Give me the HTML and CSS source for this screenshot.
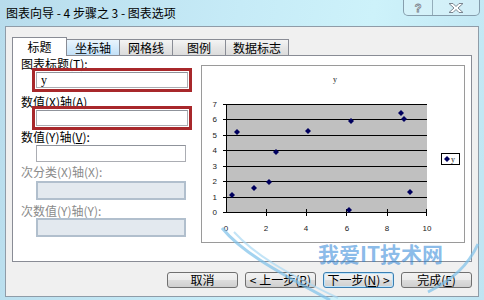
FILE: index.html
```html
<!DOCTYPE html>
<html lang="zh-CN">
<head>
    <meta charset="UTF-8">
    <meta name="viewport" content="width=device-width, initial-scale=1.0">
    <title>图表向导 - 4 步骤之 3 - 图表选项</title>
    <link rel="stylesheet" href="styles.css">
</head>
<body>
<div class="window">
    <div class="titlebar">
        <span class="caption">图表向导 - 4 步骤之 3 - 图表选项</span>
        <div class="caption-buttons">
            <span class="cap-btn help">?</span>
            <span class="cap-btn close">
                <svg width="16" height="10" viewBox="0 0 16 10">
                    <path d="M1 0.5h4l3 3 3-3h4l-5 4.5 5 4.5h-4l-3-3-3 3h-4l5-4.5z" fill="#fff" stroke="#7a8590" stroke-width="1"/>
                </svg>
            </span>
        </div>
    </div>

    <div class="client">
        <div class="tabs">
            <div class="tab selected">标题</div>
            <div class="tab hover">坐标轴</div>
            <div class="tab">网格线</div>
            <div class="tab">图例</div>
            <div class="tab">数据标志</div>
        </div>

        <div class="panel">
            <div class="fields">
                <div class="field-label">图表标题(<u>T</u>):</div>
                <div class="mark"><div class="textbox">y</div></div>
                <div class="field-label after-mark">数值(X)轴(<u>A</u>)</div>
                <div class="mark"><div class="textbox"></div></div>
                <div class="field-label after-mark2">数值(Y)轴(<u>V</u>):</div>
                <div class="textbox plain"></div>
                <div class="field-label disabled after-box">次分类(X)轴(X):</div>
                <div class="textbox off first-off"></div>
                <div class="field-label disabled after-off">次数值(Y)轴(Y):</div>
                <div class="textbox off"></div>
            </div>

            <div class="preview">
                <svg class="chart" width="262" height="176" viewBox="0 0 262 176">
                    <defs>
                        <path id="pt" d="M0 -3L3 0L0 3L-3 0Z"/>
                    </defs>
                    <text class="chart-title" x="131" y="16">y</text>

                    <rect x="24" y="38" width="201" height="108" fill="#c0c0c0"/>
                    <g stroke="#000" stroke-width="1">
                        <line x1="24" y1="38.5" x2="225" y2="38.5"/>
                        <line x1="24" y1="53.5" x2="225" y2="53.5"/>
                        <line x1="24" y1="69.5" x2="225" y2="69.5"/>
                        <line x1="24" y1="84.5" x2="225" y2="84.5"/>
                        <line x1="24" y1="100.5" x2="225" y2="100.5"/>
                        <line x1="24" y1="115.5" x2="225" y2="115.5"/>
                        <line x1="24" y1="131.5" x2="225" y2="131.5"/>
                        <line x1="24.5" y1="38" x2="24.5" y2="147"/>
                        <line x1="21" y1="146.5" x2="225" y2="146.5"/>
                        <!-- ticks -->
                        <line x1="21" y1="38.5" x2="24" y2="38.5"/>
                        <line x1="21" y1="53.5" x2="24" y2="53.5"/>
                        <line x1="21" y1="69.5" x2="24" y2="69.5"/>
                        <line x1="21" y1="84.5" x2="24" y2="84.5"/>
                        <line x1="21" y1="100.5" x2="24" y2="100.5"/>
                        <line x1="21" y1="115.5" x2="24" y2="115.5"/>
                        <line x1="21" y1="131.5" x2="24" y2="131.5"/>
                        <line x1="64.5" y1="143" x2="64.5" y2="150"/>
                        <line x1="104.5" y1="143" x2="104.5" y2="150"/>
                        <line x1="144.5" y1="143" x2="144.5" y2="150"/>
                        <line x1="185.5" y1="143" x2="185.5" y2="150"/>
                        <line x1="224.5" y1="143" x2="224.5" y2="150"/>
                    </g>

                    <g class="axis-y">
                        <text x="15" y="41">7</text>
                        <text x="15" y="56">6</text>
                        <text x="15" y="72">5</text>
                        <text x="15" y="87">4</text>
                        <text x="15" y="103">3</text>
                        <text x="15" y="118">2</text>
                        <text x="15" y="134">1</text>
                        <text x="15" y="149">0</text>
                    </g>
                    <g class="axis-x">
                        <text x="24" y="165">0</text>
                        <text x="64" y="165">2</text>
                        <text x="104" y="165">4</text>
                        <text x="145" y="165">6</text>
                        <text x="185" y="165">8</text>
                        <text x="225" y="165">10</text>
                    </g>

                    <g fill="#00005e">
                        <use href="#pt" x="30" y="129"/>
                        <use href="#pt" x="35" y="66"/>
                        <use href="#pt" x="52" y="122"/>
                        <use href="#pt" x="67" y="116"/>
                        <use href="#pt" x="74" y="86"/>
                        <use href="#pt" x="106" y="65"/>
                        <use href="#pt" x="149" y="55"/>
                        <use href="#pt" x="147" y="144"/>
                        <use href="#pt" x="199" y="47"/>
                        <use href="#pt" x="202" y="53"/>
                        <use href="#pt" x="208" y="126"/>
                    </g>

                    <rect x="239.5" y="87.5" width="18" height="11" fill="#fff" stroke="#000"/>
                    <use href="#pt" x="245" y="93" fill="#00005e"/>
                    <text class="legend-text" x="249" y="96">y</text>
                </svg>
            </div>
        </div>

        <div class="buttons">
            <button class="btn">取消</button>
            <button class="btn">&lt; 上一步(<u>B</u>)</button>
            <button class="btn focused">下一步(<u>N</u>) &gt;</button>
            <button class="btn">完成(<u>F</u>)</button>
        </div>
    </div>

    <!-- site watermark over the screenshot -->
    <svg class="swoosh" width="264" height="80" viewBox="0 0 264 80">
        <path d="M2 6 C20 28 50 46 110 78" fill="none" stroke="#7cc0ea" stroke-width="3" opacity="0.7"/>
        <path d="M14 10 C34 32 64 50 118 76" fill="none" stroke="#a9d8f3" stroke-width="2" opacity="0.7"/>
        <path d="M258 22 C248 44 232 58 208 70" fill="none" stroke="#7cc0ea" stroke-width="3" opacity="0.7"/>
    </svg>
    <div class="watermark">我爱IT技术网</div>
</div>
</body>
</html>
```

FILE: styles.css
```css
body {
    margin: 0;
    font-family: "Noto Sans CJK SC", "Liberation Sans", sans-serif;
    font-size: 12px;
    color: #000;
}
.window {
    position: relative;
    width: 484px;
    height: 300px;
    overflow: hidden;
    background: linear-gradient(100deg, #b8dcec 0%, #c6ebf7 45%, #cdf2fa 70%, #bfe4f2 100%);
}

/* Title bar */
.titlebar {
    display: flex;
    align-items: flex-start;
    height: 26px;
}
.caption {
    padding-left: 6px;
    line-height: 26px;
    font-size: 12px;
}
.caption-buttons {
    display: flex;
    margin-left: auto;
    margin-right: 4px;
    height: 15px;
    border: 1px solid rgba(70, 90, 110, 0.55);
    border-top: none;
    border-radius: 0 0 5px 5px;
    background: rgba(255, 255, 255, 0.22);
}
.cap-btn {
    display: flex;
    align-items: center;
    justify-content: center;
}
.help {
    width: 28px;
    font-family: "Liberation Sans", sans-serif;
    font-size: 11px;
    font-weight: bold;
    color: #fff;
    -webkit-text-stroke: 0.8px #7a8590;
}
.close {
    width: 46px;
    border-left: 1px solid rgba(70, 90, 110, 0.45);
}

/* Client area */
.client {
    margin: 0 5px;
    height: 271px;
    box-sizing: border-box;
    border: 1px solid #8f9ca8;
    background: #f0f0f0;
}
.tabs {
    display: flex;
    align-items: flex-end;
    height: 18px;
    margin: 10px 6px 0;
}
.tab {
    box-sizing: border-box;
    min-width: 53px;
    height: 16px;
    padding: 0 7px;
    border: 1px solid #898c95;
    border-bottom: none;
    border-left: none;
    background: linear-gradient(#f4f4f4, #e6e6e6 50%, #dcdcdc);
    line-height: 15px;
    text-align: center;
}
.tab.hover {
    background: linear-gradient(#eaf5fd, #d6ebfa 50%, #c2e0f7);
}
.tab.selected {
    position: relative;
    min-width: 55px;
    height: 19px;
    margin-bottom: -1px;
    border-left: 1px solid #898c95;
    background: #fff;
    line-height: 18px;
}

.panel {
    display: flex;
    align-items: flex-start;
    height: 207px;
    box-sizing: border-box;
    margin: 0 6px;
    padding: 0 6px 0 8px;
    border: 1px solid #898c95;
    background: #fff;
}

/* Left column of fields */
.fields {
    display: flex;
    flex-direction: column;
    align-items: flex-start;
    width: 180px;
    padding-top: 2px;
}
.field-label {
    height: 12px;
    line-height: 12px;
    white-space: nowrap;
}
.field-label.disabled {
    color: #8a8a8a;
}
.after-mark {
    margin-top: 4px;
}
.after-mark2 {
    margin-top: 1px;
}
.after-box {
    margin-top: 4px;
}
.after-off {
    margin-top: 5px;
}
.mark {
    margin: -2px 0 0 11px;
    padding: 1px;
    border: 3px solid #a8282b;
}
.textbox {
    box-sizing: border-box;
    width: 152px;
    height: 16px;
    padding-left: 4px;
    border: 1px solid #abadb3;
    border-top-color: #8f939b;
    background: #fff;
    font-family: "Liberation Serif", serif;
    font-size: 12px;
    line-height: 14px;
}
.textbox.plain {
    width: 150px;
    height: 17px;
    margin: 2px 0 0 15px;
}
.textbox.off {
    width: 150px;
    height: 19px;
    margin: 1px 0 0 15px;
    border: 2px solid #b1bfcd;
    background: #e3e9ef;
}
.textbox.first-off {
    margin-top: 3px;
}

/* Chart preview */
.preview {
    width: 264px;
    height: 178px;
    box-sizing: border-box;
    margin-top: 9px;
    border: 1px solid #9a9a9a;
    background: #fff;
}
.chart {
    display: block;
}
.chart text {
    font-family: "Liberation Sans", sans-serif;
    font-size: 8px;
    fill: #222;
}
.chart .chart-title,
.chart .legend-text {
    font-family: "Liberation Serif", serif;
}
.axis-y text {
    text-anchor: end;
}
.axis-x text {
    text-anchor: middle;
}

/* Bottom buttons */
.buttons {
    display: flex;
    justify-content: flex-end;
    gap: 7px;
    margin: 10px 6px 0;
}
.btn {
    width: 71px;
    height: 16px;
    padding: 0;
    border: 1px solid #707070;
    border-radius: 3px;
    background: linear-gradient(#f2f2f2, #ebebeb 50%, #dddddd 50%, #cfcfcf);
    font-family: "Noto Sans CJK SC", "Liberation Sans", sans-serif;
    font-size: 12px;
    line-height: 14px;
    color: #000;
}
.btn.focused {
    border-color: #3c7fb1;
    box-shadow: inset 0 0 0 1px #bfe4fb;
}

/* Watermark */
.swoosh {
    position: absolute;
    left: 220px;
    top: 222px;
    pointer-events: none;
}
.watermark {
    position: absolute;
    left: 318px;
    top: 242px;
    font-size: 21px;
    font-weight: bold;
    line-height: 22px;
    color: rgba(40, 130, 215, 0.55);
    pointer-events: none;
}
```
